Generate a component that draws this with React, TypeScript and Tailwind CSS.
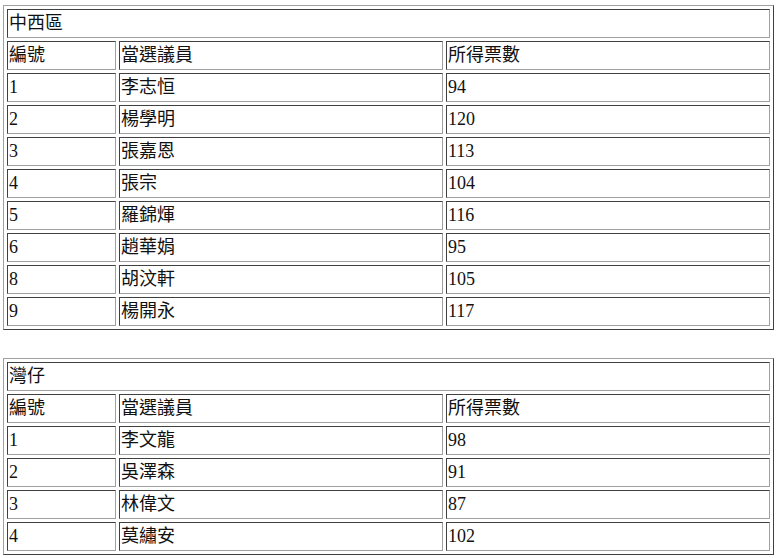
import React from 'react';

type Row = { no: string; name: string; votes: string };

const districts: { title: string; rows: Row[] }[] = [
  {
    title: '中西區',
    rows: [
      { no: '1', name: '李志恒', votes: '94' },
      { no: '2', name: '楊學明', votes: '120' },
      { no: '3', name: '張嘉恩', votes: '113' },
      { no: '4', name: '張宗', votes: '104' },
      { no: '5', name: '羅錦煇', votes: '116' },
      { no: '6', name: '趙華娟', votes: '95' },
      { no: '8', name: '胡汶軒', votes: '105' },
      { no: '9', name: '楊開永', votes: '117' },
    ],
  },
  {
    title: '灣仔',
    rows: [
      { no: '1', name: '李文龍', votes: '98' },
      { no: '2', name: '吳澤森', votes: '91' },
      { no: '3', name: '林偉文', votes: '87' },
      { no: '4', name: '莫繡安', votes: '102' },
    ],
  },
];

const cell =
  'p-0 pl-px text-left align-middle font-normal leading-[27px] border border-t-[#404040] border-l-[#404040] border-b-[#a0a0a0] border-r-[#a0a0a0]';

const DistrictTable: React.FC<{ title: string; rows: Row[] }> = ({ title, rows }) => (
  <table className="w-[771px] table-fixed border-separate border-spacing-[3px] border border-t-[#a0a0a0] border-l-[#a0a0a0] border-b-[#404040] border-r-[#404040]">
    <colgroup>
      <col className="w-[109px]" />
      <col className="w-[324px]" />
      <col className="w-[324px]" />
    </colgroup>
    <tbody>
      <tr>
        <td colSpan={3} className={cell}>{title}</td>
      </tr>
      <tr>
        <td className={cell}>編號</td>
        <td className={cell}>當選議員</td>
        <td className={cell}>所得票數</td>
      </tr>
      {rows.map((r) => (
        <tr key={r.no}>
          <td className={cell}>{r.no}</td>
          <td className={cell}>{r.name}</td>
          <td className={cell}>{r.votes}</td>
        </tr>
      ))}
    </tbody>
  </table>
);

export default function App() {
  return (
    <div className="min-h-[558px] bg-white pl-[3px] pt-[5px] text-[18px] text-[#111] [font-family:'Liberation_Serif','Noto_Sans_CJK_TC',serif]">
      <div className="flex flex-col gap-[28px]">
        {districts.map((d) => (
          <DistrictTable key={d.title} title={d.title} rows={d.rows} />
        ))}
      </div>
    </div>
  );
}
